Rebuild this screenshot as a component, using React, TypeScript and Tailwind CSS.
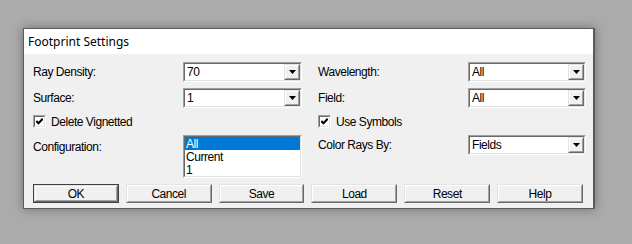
import React from "react";

const label = "text-[12px] tracking-[-0.45px] text-black leading-none";

function Sunken({ className = "", children }: { className?: string; children: React.ReactNode }) {
  return (
    <div className={`border border-t-[#a0a0a0] border-l-[#a0a0a0] border-b-white border-r-white ${className}`}>
      <div className="flex h-full border border-t-[#696969] border-l-[#696969] border-b-[#e3e3e3] border-r-[#e3e3e3] bg-white">
        {children}
      </div>
    </div>
  );
}

function Combo({ value, w }: { value: string; w: string }) {
  return (
    <Sunken className={`${w} h-[20px]`}>
      <div className={`${label} flex flex-1 items-center pl-[2px]`}>{value}</div>
      <div className="h-full w-[16px] border border-t-[#e3e3e3] border-l-[#e3e3e3] border-b-[#696969] border-r-[#696969]">
        <div className="flex h-full items-center justify-center border border-t-white border-l-white border-b-[#a0a0a0] border-r-[#a0a0a0] bg-[#f0f0f0]">
          <svg width="7" height="4" viewBox="0 0 7 4">
            <path d="M0 0h7L3.5 4z" fill="#000" />
          </svg>
        </div>
      </div>
    </Sunken>
  );
}

function Check({ text }: { text: string }) {
  return (
    <div className="flex items-center gap-[5px]">
      <div className="h-[13px] w-[13px] border border-t-[#a0a0a0] border-l-[#a0a0a0] border-b-white border-r-white">
        <div className="flex h-full items-center justify-center border border-t-[#696969] border-l-[#696969] border-b-[#e3e3e3] border-r-[#e3e3e3] bg-white">
          <svg width="7" height="7" viewBox="0 0 7 7">
            <path d="M0.3 3l2.2 2.3L6.7 0.8" stroke="#000" strokeWidth="2" fill="none" />
          </svg>
        </div>
      </div>
      <span className={label}>{text}</span>
    </div>
  );
}

function Btn({ text, primary }: { text: string; primary?: boolean }) {
  const inner = (
    <div className="flex h-full items-center justify-center border border-t-white border-l-white border-b-[#a0a0a0] border-r-[#a0a0a0] bg-[#f0f0f0]">
      <span className={label}>{text}</span>
    </div>
  );
  return primary ? (
    <div className="h-[19px] flex-1 border border-[#404040]">
      <div className="h-full border border-t-[#e3e3e3] border-l-[#e3e3e3] border-b-[#696969] border-r-[#696969]">{inner}</div>
    </div>
  ) : (
    <div className="h-[19px] flex-1 border border-t-[#e3e3e3] border-l-[#e3e3e3] border-b-[#696969] border-r-[#696969]">{inner}</div>
  );
}

export default function App() {
  return (
    <div
      className="h-[244px] w-[632px] overflow-hidden bg-[#ababab] pl-[23px] pt-[28px]"
      style={{ fontFamily: '"Liberation Sans", Arial, sans-serif' }}
    >
      <div className="w-[572px] border border-[#5a5a5a] border-r-2 bg-[#f0f0f0] shadow-[0_0_10px_rgba(0,0,0,0.35)]">
        <div
          className="flex h-[25px] items-center bg-white pl-[4px] text-[12px] text-black"
          style={{ fontFamily: '"Noto Sans", "Open Sans", sans-serif' }}
        >
          Footprint Settings
        </div>
        <div className="px-[9px] pb-[5px] pt-[8px]">
          <div className="grid grid-cols-[269px_268px] gap-x-[16px]">
            <div className="flex flex-col">
              <div className="flex h-[20px] items-center justify-between">
                <span className={label}>Ray Density:</span>
                <Combo value="70" w="w-[119px]" />
              </div>
              <div className="mt-[6px] flex h-[20px] items-center justify-between">
                <span className={label}>Surface:</span>
                <Combo value="1" w="w-[119px]" />
              </div>
              <div className="mt-[7px] flex h-[13px] items-center">
                <Check text="Delete Vignetted" />
              </div>
              <div className="mt-[7px] flex items-start justify-between">
                <span className={`${label} mt-[6px]`}>Configuration:</span>
                <Sunken className="h-[43px] w-[119px]">
                  <div className="flex flex-1 flex-col">
                    <div className={`${label} flex h-[13px] items-center bg-[#0078d7] pl-[1px] text-white`}>All</div>
                    <div className={`${label} flex h-[13px] items-center pl-[1px]`}>Current</div>
                    <div className={`${label} flex h-[13px] items-center pl-[1px]`}>1</div>
                  </div>
                </Sunken>
              </div>
            </div>
            <div className="flex flex-col">
              <div className="flex h-[20px] items-center justify-between">
                <span className={label}>Wavelength:</span>
                <Combo value="All" w="w-[118px]" />
              </div>
              <div className="mt-[6px] flex h-[20px] items-center justify-between">
                <span className={label}>Field:</span>
                <Combo value="All" w="w-[118px]" />
              </div>
              <div className="mt-[7px] flex h-[13px] items-center">
                <Check text="Use Symbols" />
              </div>
              <div className="mt-[7px] flex items-center justify-between">
                <span className={label}>Color Rays By:</span>
                <Combo value="Fields" w="w-[118px]" />
              </div>
            </div>
          </div>
          <div className="mt-[6px] flex gap-[7px] pr-[1px]">
            <Btn text="OK" primary />
            <Btn text="Cancel" />
            <Btn text="Save" />
            <Btn text="Load" />
            <Btn text="Reset" />
            <Btn text="Help" />
          </div>
        </div>
      </div>
    </div>
  );
}
